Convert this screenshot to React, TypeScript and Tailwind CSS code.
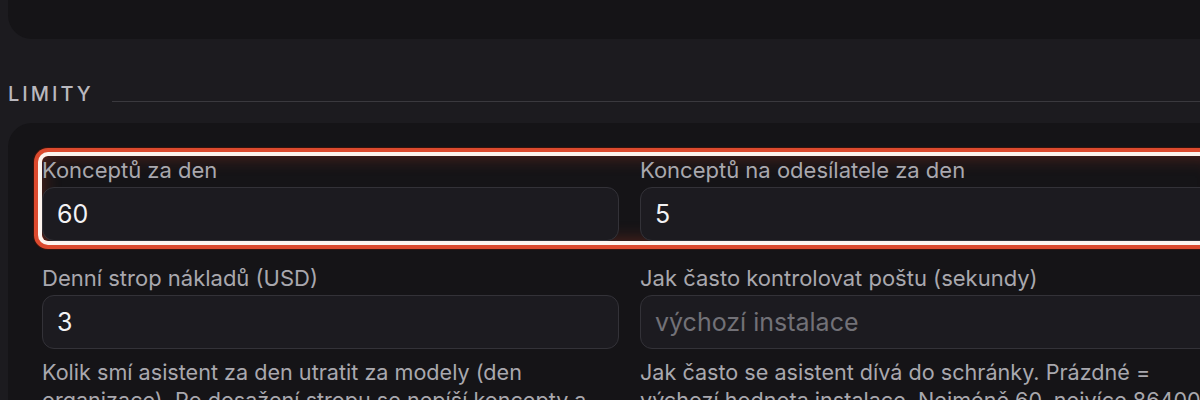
import React from 'react';

interface FieldProps {
  label: string;
  value?: string;
  placeholder?: string;
  hint?: string;
}

const Field: React.FC<FieldProps> = ({ label, value, placeholder, hint }) => {
  return (
    <div className="flex flex-col">
      <label className="text-[22px] leading-[28px] text-[#a9a8ae] mb-[3px]">{label}</label>
      <input
        readOnly
        value={value ?? ''}
        placeholder={placeholder}
        className="h-[54px] w-full rounded-[12px] border border-[#333238] bg-[#1c1b20] px-[14px] text-[25px] text-[#f2f2f4] placeholder:text-[#727177] outline-none"
      />
      {hint && (
        <p className="mt-[9px] text-[21.6px] leading-[28px] text-[#a9a8ae]">{hint}</p>
      )}
    </div>
  );
};

const App: React.FC = () => {
  return (
    <div className="w-[1200px] h-[400px] overflow-hidden bg-[#1c1b1f] font-['Inter',sans-serif]">
      <div className="w-[1280px] pl-[8px]">
        {/* previous section card, cut off at the top */}
        <div className="h-[39px] rounded-bl-[24px] bg-[#151417]"></div>

        {/* Section header */}
        <div className="mt-[41px] flex items-baseline gap-[18px]">
          <h2 className="text-[20px] leading-[28px] tracking-[0.15em] text-[#b9b8be] font-medium">LIMITY</h2>
          <div className="h-px flex-1 bg-[#3a393e] translate-y-[1px]"></div>
        </div>

        {/* Limits card */}
        <div className="mt-[15px] rounded-tl-[24px] bg-[#151417] pl-[34px] pt-[33px] pb-10">
          <div className="grid grid-cols-[577px_577px] gap-x-[21px]">
            <div className="col-span-2 grid grid-cols-[577px_577px] gap-x-[21px] rounded-[6px] shadow-[0_0_0_4px_#fdf4ee,0_0_0_8px_#dc4a2e,0_0_0_9px_rgba(60,20,12,0.8),inset_0_0_18px_rgba(200,64,40,0.4)]">
              <Field label="Konceptů za den" value="60" />
              <Field label="Konceptů na odesílatele za den" value="5" />
            </div>
            <div className="col-span-2 mt-[23px] grid grid-cols-[577px_577px] gap-x-[21px]">
              <Field
                label="Denní strop nákladů (USD)"
                value="3"
                hint="Kolik smí asistent za den utratit za modely (den organizace). Po dosažení stropu se nepíší koncepty a čeká se na další den."
              />
              <Field
                label="Jak často kontrolovat poštu (sekundy)"
                placeholder="výchozí instalace"
                hint="Jak často se asistent dívá do schránky. Prázdné = výchozí hodnota instalace. Nejméně 60, nejvíce 86400."
              />
            </div>
          </div>
        </div>
      </div>
    </div>
  );
};

export default App;
